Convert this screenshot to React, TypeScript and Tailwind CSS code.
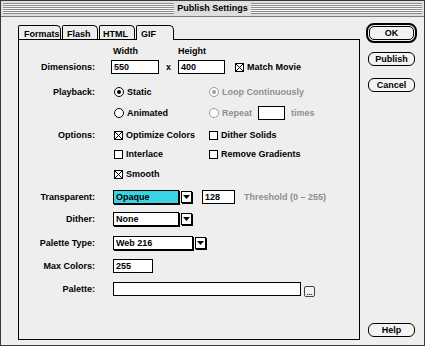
import type { ReactNode } from 'react';

const base = "font-['Liberation_Sans',Arial,sans-serif] font-bold text-[9px] leading-none text-black";

function Checkbox({ checked }: { checked?: boolean }) {
  return (
    <span className="relative block w-[9px] h-[9px] shrink-0 border border-black bg-white">
      {checked && (
        <svg viewBox="0 0 7 7" className="absolute left-0 top-0 w-[7px] h-[7px]">
          <path d="M0 0L7 7M7 0L0 7" stroke="#000" strokeWidth="1" />
        </svg>
      )}
    </span>
  );
}

function Radio({ checked, disabled }: { checked?: boolean; disabled?: boolean }) {
  return (
    <span
      className={
        disabled
          ? 'flex items-center justify-center w-[10px] h-[10px] shrink-0 rounded-full border border-[#9a9a9a] bg-white'
          : 'flex items-center justify-center w-[10px] h-[10px] shrink-0 rounded-full border border-black bg-white'
      }
    >
      {checked && (
        <span
          className={
            disabled
              ? 'block w-[4px] h-[4px] rounded-full bg-[#9a9a9a]'
              : 'block w-[4px] h-[4px] rounded-full bg-black'
          }
        />
      )}
    </span>
  );
}

function Option({ children, control, gray }: { children: ReactNode; control: ReactNode; gray?: boolean }) {
  return (
    <div className={gray ? 'flex items-center gap-[3px] text-[#8f8f8f]' : 'flex items-center gap-[3px]'}>
      {control}
      <span>{children}</span>
    </div>
  );
}

function Field({ value, className }: { value?: string; className: string }) {
  return (
    <div className={`h-[14px] border border-black bg-white px-[2px] flex items-center ${className}`}>
      {value}
    </div>
  );
}

function Arrow() {
  return (
    <div className="ml-[2px] w-[11px] h-[12px] border border-black bg-white shadow-[1px_1px_0_#000] flex items-center justify-center">
      <svg viewBox="0 0 7 4" className="w-[7px] h-[4px]">
        <polygon points="0,0 7,0 3.5,4" fill="#000" />
      </svg>
    </div>
  );
}

function Row({ label, className, children }: { label: string; className?: string; children?: ReactNode }) {
  return (
    <div className={`flex items-center h-[16px] ${className ?? ''}`}>
      <div className="w-[76px] text-right shrink-0">{label}</div>
      <div className="ml-[16px] flex items-center">{children}</div>
    </div>
  );
}

function Button({ children }: { children: ReactNode }) {
  return (
    <div className="w-[47px] h-[14px] rounded-[6px] border border-black bg-[#f3f3f3] flex items-center justify-center">
      {children}
    </div>
  );
}

const stripes =
  'flex-1 h-[11px] bg-[repeating-linear-gradient(to_bottom,#8c8c8c_0px,#8c8c8c_1px,#f7f7f7_1px,#f7f7f7_2px)]';

export default function App() {
  return (
    <div className={`w-[425px] h-[346px] border border-[#3a3a3a] bg-[#eeeeee] flex flex-col ${base}`}>
      {/* title bar */}
      <div className="h-[16px] shrink-0 flex items-center px-[2px] gap-[3px] bg-[#dedede] border-b border-[#7a7a7a]">
        <div className={stripes} />
        <span className="text-[9px]">Publish Settings</span>
        <div className={stripes} />
      </div>

      <div className="flex flex-1 pl-[17px]">
        {/* tabs + panel */}
        <div className="pt-[8px] flex flex-col">
          <div className="flex items-end h-[14px] gap-[1px]">
            <div className="h-[14px] w-[43px] pl-[5px] pt-[4px] border-l border-t border-r border-black rounded-tl-[2px] rounded-tr-[5px] bg-[#eeeeee]">
              Formats
            </div>
            <div className="h-[14px] w-[36px] pl-[4px] pt-[4px] border-l border-t border-r border-black rounded-tl-[2px] rounded-tr-[5px] bg-[#eeeeee]">
              Flash
            </div>
            <div className="h-[14px] w-[36px] pl-[3px] pt-[4px] border-l border-t border-r border-black rounded-tl-[2px] rounded-tr-[5px] bg-[#eeeeee]">
              HTML
            </div>
            <div className="relative z-10 -mb-px h-[15px] w-[38px] pl-[4px] pt-[4px] border-l border-t border-r border-black rounded-tl-[2px] rounded-tr-[5px] bg-[#eeeeee]">
              GIF
            </div>
          </div>

          <div className="w-[342px] h-[301px] border border-black pt-[4px] flex flex-col">
            {/* Width / Height header */}
            <div className="flex items-center h-[15px]">
              <div className="w-[92px] shrink-0" />
              <div className="w-[67px] pl-[2px]">Width</div>
              <div>Height</div>
            </div>

            <Row label="Dimensions:">
              <Field value="550" className="w-[48px]" />
              <span className="w-[19px] text-center">x</span>
              <Field value="400" className="w-[47px]" />
              <div className="ml-[10px]">
                <Option control={<Checkbox checked />}>Match Movie</Option>
              </div>
            </Row>

            <Row label="Playback:" className="mt-[9px]">
              <div className="ml-[3px] w-[95px]">
                <Option control={<Radio checked />}>Static</Option>
              </div>
              <Option gray control={<Radio checked disabled />}>
                Loop Continuously
              </Option>
            </Row>

            <Row label="" className="mt-[5px]">
              <div className="ml-[3px] w-[95px]">
                <Option control={<Radio />}>Animated</Option>
              </div>
              <Option gray control={<Radio disabled />}>
                Repeat
              </Option>
              <Field className="ml-[6px] w-[27px]" />
              <span className="ml-[6px] text-[#8f8f8f]">times</span>
            </Row>

            <Row label="Options:" className="mt-[6px]">
              <div className="ml-[3px] w-[95px]">
                <Option control={<Checkbox checked />}>Optimize Colors</Option>
              </div>
              <Option control={<Checkbox />}>Dither Solids</Option>
            </Row>

            <Row label="" className="mt-[3px]">
              <div className="ml-[3px] w-[95px]">
                <Option control={<Checkbox />}>Interlace</Option>
              </div>
              <Option control={<Checkbox />}>Remove Gradients</Option>
            </Row>

            <Row label="" className="mt-[4px]">
              <div className="ml-[3px] w-[95px]">
                <Option control={<Checkbox checked />}>Smooth</Option>
              </div>
            </Row>

            <Row label="Transparent:" className="mt-[7px]">
              <div className="ml-[2px] w-[66px] h-[14px] border border-black bg-[#3ad3e3] shadow-[1px_1px_0_#000] px-[2px] flex items-center">
                Opaque
              </div>
              <Arrow />
              <Field value="128" className="ml-[10px] w-[33px]" />
              <span className="ml-[9px] text-[#8f8f8f]">Threshold (0 – 255)</span>
            </Row>

            <Row label="Dither:" className="mt-[6px]">
              <div className="ml-[2px] w-[66px] h-[14px] border border-black bg-white shadow-[1px_1px_0_#000] px-[2px] flex items-center">
                None
              </div>
              <Arrow />
            </Row>

            <Row label="Palette Type:" className="mt-[8px]">
              <div className="ml-[2px] w-[80px] h-[14px] border border-black bg-white shadow-[1px_1px_0_#000] px-[2px] flex items-center">
                Web 216
              </div>
              <Arrow />
            </Row>

            <Row label="Max Colors:" className="mt-[7px]">
              <Field value="255" className="ml-[2px] w-[40px]" />
            </Row>

            <Row label="Palette:" className="mt-[7px]">
              <Field className="ml-[2px] w-[188px]" />
              <div className="ml-[3px] mt-[4px] w-[11px] h-[11px] rounded-[2px] border border-[#444] bg-[#f3f3f3] flex items-end justify-center text-[7px] leading-[7px]">
                ...
              </div>
            </Row>
          </div>
        </div>

        {/* buttons column */}
        <div className="ml-[6px] pt-[6px] pb-[8px] flex flex-col items-start">
          <div className="w-[51px] h-[20px] rounded-[8px] border-[2px] border-black p-[1px]">
            <div className="w-full h-full rounded-[5px] border border-black bg-[#f3f3f3] flex items-center justify-center">
              OK
            </div>
          </div>
          <div className="ml-[2px] mt-[9px]">
            <Button>Publish</Button>
          </div>
          <div className="ml-[2px] mt-[12px]">
            <Button>Cancel</Button>
          </div>
          <div className="ml-[2px] mt-auto">
            <Button>Help</Button>
          </div>
        </div>
      </div>
    </div>
  );
}
